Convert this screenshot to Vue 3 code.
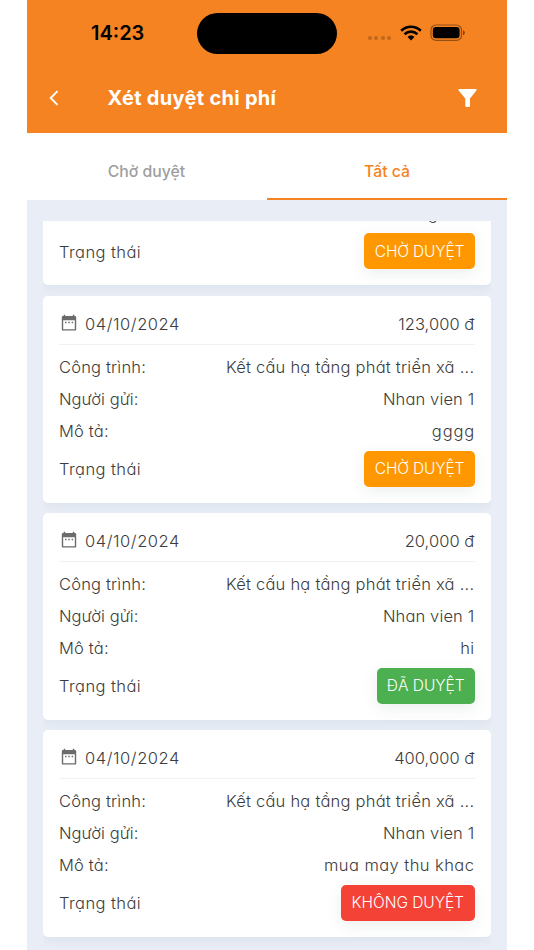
<script setup>
const site = 'Kết cấu hạ tầng phát triển xã ...'
const expenses = [
  { id: 1, partial: true, note: 'ghhh', noteClass: 'n-first', status: 'CHỜ DUYỆT', kind: 'pending' },
  { id: 2, date: '04/10/2024', amount: '123,000 đ', note: 'gggg', noteClass: 'n-g', status: 'CHỜ DUYỆT', kind: 'pending' },
  { id: 3, date: '04/10/2024', amount: '20,000 đ', note: 'hi', noteClass: 'n-hi', status: 'ĐÃ DUYỆT', kind: 'approved' },
  { id: 4, date: '04/10/2024', amount: '400,000 đ', note: 'mua may thu khac', noteClass: 'n-mua', status: 'KHÔNG DUYỆT', kind: 'rejected' },
]
</script>

<template>
  <div class="phone">
    <header class="top">
      <div class="status-bar">
        <span class="clock">14:23</span>
        <span class="island"></span>
        <span class="indicators">
          <span class="dots"><i v-for="n in 4" :key="n"></i></span>
          <svg class="wifi" width="22" height="16" viewBox="0 0 22 16">
            <g fill="none" stroke="#000" stroke-width="2.7">
              <path d="M1.2 5.7C6.8.4 15.2.4 20.8 5.7" />
              <path d="M4.6 9.2C8.3 5.8 13.7 5.8 17.4 9.2" />
            </g>
            <path d="M7.6 11.9C9.5 10 12.5 10 14.4 11.9L11 15.5Z" />
          </svg>
          <svg class="battery" width="36" height="18" viewBox="0 0 36 18">
            <rect x="1" y="1" width="30.5" height="15.4" rx="5" fill="none" stroke="#000" stroke-opacity=".4" stroke-width="1.2" />
            <rect x="2.8" y="2.9" width="26.8" height="11.4" rx="3.2" />
            <path d="M33 6.2C35.4 7 35.4 10.4 33 11.2Z" fill-opacity=".5" />
          </svg>
        </span>
      </div>
      <div class="nav">
        <svg class="back" width="10" height="16" viewBox="0 0 10 16">
          <path d="M8.5 1.2L1.7 8L8.5 14.8" fill="none" stroke="#fff" stroke-width="1.9" />
        </svg>
        <h1>Xét duyệt chi phí</h1>
        <svg class="filter" width="20" height="20" viewBox="0 0 20 20">
          <path d="M1.3.9H17.7Q19.2 1.2 18.4 2.5L12 10.4V18Q12 19.1 10.9 19.1H8.4Q7.3 19.1 7.3 18V10.4L.6 2.5Q-.1 1.2 1.3.9Z" fill="#fff" />
        </svg>
      </div>
    </header>

    <nav class="tabs">
      <div class="tab"><span>Chờ duyệt</span></div>
      <div class="tab active"><span>Tất cả</span></div>
    </nav>

    <main class="list">
      <article v-for="e in expenses" :key="e.id" class="card" :class="{ partial: e.partial }">
        <div v-if="!e.partial" class="head">
          <svg class="calendar" width="16" height="18" viewBox="0 0 16 18">
            <path fill="#6b6b6b" fill-rule="evenodd" d="M2.7.8H4.2V2H11.8V.8H13.3V2H14Q15.2 2 15.2 3.2V15.4Q15.2 16.6 14 16.6H2Q.8 16.6.8 15.4V3.2Q.8 2 2 2H2.7ZM2.2 6.2V15.2H13.8V6.2Z" />
            <path fill="#6b6b6b" d="M4 7.7h1.5v1.5H4zM7.3 7.7h1.5v1.5H7.3zM10.6 7.7h1.5v1.5h-1.5z" />
          </svg>
          <span class="date">{{ e.date }}</span>
          <span class="value amount">{{ e.amount }}</span>
        </div>
        <div class="rows">
          <div v-if="!e.partial" class="row"><span class="l-site">Công trình:</span><span class="value v-site">{{ site }}</span></div>
          <div v-if="!e.partial" class="row"><span class="l-from">Người gửi:</span><span class="value v-from">Nhan vien 1</span></div>
          <div class="row"><span v-if="!e.partial" class="l-note">Mô tả:</span><span class="value" :class="e.noteClass">{{ e.note }}</span></div>
        </div>
        <div class="state">
          <span class="l-state">Trạng thái</span>
          <span class="badge" :class="e.kind"><b>{{ e.status }}</b></span>
        </div>
      </article>
    </main>
  </div>
</template>

<style>
body {
  background: #fff;
  overflow: hidden;
}
</style>

<style scoped>
.phone {
  width: 480px;
  height: 950px;
  margin: 0 auto;
  display: flex;
  flex-direction: column;
  overflow: hidden;
  background: #e8edf6;
  font-family: Inter, "Liberation Sans", sans-serif;
}
.top {
  flex: none;
  height: 133px;
  background: #f58322;
}
.status-bar {
  height: 66px;
  display: grid;
  grid-template-columns: 170px 140px 1fr;
  align-items: center;
}
.clock {
  padding-left: 64px;
  font-size: 20px;
  font-weight: 600;
  color: #000;
}
.island {
  height: 41px;
  border-radius: 21px;
  background: #000;
}
.indicators {
  display: flex;
  align-items: center;
  padding-left: 30.5px;
}
.dots {
  display: flex;
  gap: 2.4px;
  margin: 10px 8.5px 0 0;
}
.dots i {
  width: 4.2px;
  height: 4.2px;
  border-radius: 50%;
  background: #bf681f;
}
.battery {
  margin-left: 8.5px;
}
.nav {
  height: 64px;
  display: flex;
  align-items: center;
  padding: 0 29px 0 21.5px;
}
h1 {
  flex: 1;
  margin: 0 0 0 49px;
  font-size: 20px;
  font-weight: 700;
  line-height: 30px;
  letter-spacing: 0.3px;
  color: #fff;
}
.tabs {
  flex: none;
  height: 67px;
  display: grid;
  grid-template-columns: 1fr 1fr;
  background: #fff;
}
.tab {
  display: flex;
  align-items: center;
  justify-content: center;
  box-sizing: border-box;
  padding-top: 11px;
  font-size: 15.8px;
  font-weight: 500;
  color: #9e9e9e;
  border-bottom: 2.5px solid transparent;
}
.tab:first-child {
  padding-right: 1px;
}
.tab.active {
  color: #f58322;
  border-bottom-color: #f58322;
}
.list {
  flex: 1;
  min-height: 0;
  margin: 21px 16px 0;
  overflow: hidden;
  color: #3c3c3c;
  font-size: 16.5px;
  font-weight: 300;
  font-feature-settings: "cv11";
  letter-spacing: 0.25px;
  white-space: nowrap;
}
.card {
  box-sizing: border-box;
  height: 206.5px;
  margin-bottom: 10.6px;
  padding: 8px 16px 16px;
  border-radius: 5px;
  background: #fff;
  box-shadow: 0 5px 10px rgba(30, 60, 50, 0.04);
}
.partial {
  height: 88px;
  margin-top: -23.6px;
  padding-top: 0;
}
.partial .rows {
  padding-top: 0;
}
.head {
  height: 40px;
  display: flex;
  align-items: center;
  border-bottom: 1px solid #f2f2f2;
}
.calendar {
  margin: 0 8.5px 2px 1.5px;
}
.date {
  letter-spacing: 0.57px;
}
.value {
  margin-left: auto;
  padding-right: 0.7px;
}
.amount {
  letter-spacing: 0.05px;
}
.rows {
  padding-top: 5.5px;
}
.row {
  height: 32px;
  display: flex;
  align-items: center;
}
.l-site,
.l-note {
  letter-spacing: 0.18px;
}
.l-from {
  letter-spacing: 0.05px;
}
.v-site {
  letter-spacing: 0.23px;
}
.v-from {
  letter-spacing: 0.13px;
}
.n-g {
  letter-spacing: 0.9px;
  margin-right: -0.9px;
}
.n-first {
  letter-spacing: 1.8px;
}
.n-mua {
  letter-spacing: 0.43px;
}
.l-state {
  padding-top: 1.5px;
  letter-spacing: 0.42px;
}
.state {
  height: 36px;
  margin-top: 4px;
  display: flex;
  align-items: center;
  justify-content: space-between;
}
.badge {
  height: 36px;
  display: flex;
  align-items: center;
  justify-content: center;
  border-radius: 5px;
  color: #fff;
  font-size: 15.5px;
  letter-spacing: 0;
  box-shadow: 0 4px 16px rgba(30, 80, 60, 0.09);
}
.badge b {
  font-weight: 300;
  padding-bottom: 0.5px;
}
.pending {
  width: 111px;
  background: #ff9800;
  letter-spacing: -0.15px;
}
.approved {
  width: 98.5px;
  background: #4caf50;
}
.rejected {
  width: 134.5px;
  background: #f44336;
  letter-spacing: -0.05px;
}
</style>
